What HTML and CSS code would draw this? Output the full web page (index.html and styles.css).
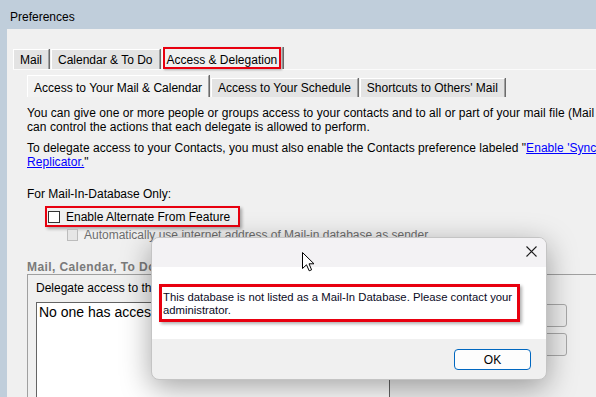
FILE: index.html
```html
<!DOCTYPE html>
<html lang="en">
<head>
    <meta charset="UTF-8">
    <title>Preferences</title>
    <link rel="stylesheet" href="styles.css">
</head>
<body>
    <div class="titlebar">Preferences</div>

    <div class="panel">
        <div class="tabs tabs-main">
            <div class="tab">Mail</div>
            <div class="tab">Calendar &amp; To Do</div>
            <div class="tab active"><span class="hl">Access &amp; Delegation</span></div>
        </div>

        <div class="page">
            <div class="tabs tabs-sub">
                <div class="tab active">Access to Your Mail &amp; Calendar</div>
                <div class="tab">Access to Your Schedule</div>
                <div class="tab">Shortcuts to Others' Mail</div>
            </div>

            <div class="content">
                <p class="note">You can give one or more people or groups access to your contacts and to all or part of your mail file (Mail<br>can control the actions that each delegate is allowed to perform.</p>
                <p class="note">To delegate access to your Contacts, you must also enable the Contacts preference labeled "<a href="#">Enable 'Sync<br>Replicator.</a>"</p>

                <p class="mid-label">For Mail-In-Database Only:</p>
                <label class="check check-hl"><span class="box"></span>Enable Alternate From Feature</label>
                <label class="check check-off"><span class="box"></span>Automatically use internet address of Mail-in database as sender</label>

                <div class="group-title">Mail, Calendar, To Do</div>
                <div class="group">
                    <div class="group-text">Delegate access to the</div>
                    <div class="group-body">
                        <div class="list">No one has access</div>
                        <div class="buttons">
                            <div class="btn"></div>
                            <div class="btn"></div>
                        </div>
                    </div>
                </div>
            </div>
        </div>
    </div>

    <!-- message box on top -->
    <div class="dialog">
        <div class="dialog-title">
            <svg class="close" width="11" height="11" viewBox="0 0 11 11">
                <path d="M0.5 0.5 L10.5 10.5 M10.5 0.5 L0.5 10.5" stroke="#1b1b1b" stroke-width="1.1" fill="none"/>
            </svg>
        </div>
        <div class="dialog-body">
            <div class="msg">This database is not listed as a Mail-In Database. Please contact your<br>administrator.</div>
        </div>
        <div class="dialog-foot">
            <button class="ok">OK</button>
        </div>
    </div>

    <svg class="cursor" width="13" height="20" viewBox="0 0 13 20">
        <path d="M0.5 0.5 L0.5 16.5 L4.5 12.8 L7.2 18.8 L9.6 17.8 L7 11.8 L12 11.8 Z" fill="#fff" stroke="#000" stroke-width="1" stroke-linejoin="round"/>
    </svg>
</body>
</html>
```

FILE: styles.css
```css
/* Global */
* {
    box-sizing: border-box;
}

body {
    margin: 0;
    height: 397px;
    overflow: hidden;
    position: relative;
    background: #c0cedb;
    font-family: "Liberation Sans", Arial, sans-serif;
    font-size: 12px;
    color: #000;
}

/* Window title */
.titlebar {
    height: 29px;
    padding: 10px 0 0 10px;
    line-height: 14px;
}

/* Window body */
.panel {
    margin-left: 7px;
    height: 368px;
    padding: 18px 0 0 6px;
    background: #f0f0f0;
    overflow: hidden;
}

/* Tabs */
.tabs {
    display: flex;
    align-items: flex-end;
    white-space: nowrap;
}

.tabs-main {
    height: 23px;
    border-bottom: 1px solid #fbfbfb;
}

.tab {
    height: 20px;
    line-height: 20px;
    padding: 0 6px;
    margin-right: 2px;
    background: #e3e3e3;
    border-top: 1px solid #fff;
    border-left: 1px solid #fff;
    border-right: 1px solid #a0a0a0;
    box-shadow: 1px 0 0 #6b6b6b;
}

.tabs-main .tab.active {
    height: 22px;
    padding: 0 1px 0 0;
    border-top: none;
    background: #f0f0f0;
}

.hl {
    display: block;
    height: 22px;
    padding: 3px 2px 0;
    line-height: 17px;
    border: 2px solid #e8000f;
    box-shadow: 1px 1px 2px rgba(0, 0, 0, 0.3);
}

.page {
    padding-left: 14px;
}

.tabs-sub {
    margin-top: 5px;
}

.tabs-sub .tab {
    height: 19px;
    line-height: 19px;
}

.tabs-sub .tab.active {
    height: 22px;
    padding-top: 3px;
    background: #f2f2f2;
}

/* Texts */
.content {
    padding-top: 9px;
}

.note {
    margin: 0 0 7px;
    line-height: 14px;
    white-space: nowrap;
    letter-spacing: 0.05px;
}

.note a {
    color: #0000ff;
}

.mid-label {
    margin: 18px 0 5px;
    line-height: 14px;
}

/* Check boxes */
.check {
    display: flex;
    align-items: center;
    white-space: nowrap;
}

.box {
    width: 12px;
    height: 12px;
    margin-right: 6px;
    background: #fff;
    border: 1px solid #333;
}

.check-hl {
    width: 195px;
    height: 21px;
    margin-left: 18px;
    padding-left: 1px;
    border: 2px solid #e8000f;
    box-shadow: 2px 2px 3px rgba(0, 0, 0, 0.3);
}

.check-off {
    height: 14px;
    margin: 1px 0 0 40px;
    color: #6d6d6d;
}

.check-off .box {
    width: 11px;
    border-color: #bcbcbc;
    background: #e6e6e6;
}

/* Delegation group */
.group-title {
    margin-top: 18px;
    line-height: 14px;
    font-weight: bold;
    color: #7a7a7a;
    letter-spacing: 0.4px;
}

.group {
    width: 620px;
    height: 140px;
    padding: 6px 0 0 8px;
    border-top: 1px solid #a0a0a0;
    border-left: 1px solid #a0a0a0;
}

.group-text {
    line-height: 14px;
    white-space: nowrap;
}

.group-body {
    display: flex;
    margin-top: 7px;
}

.list {
    width: 354px;
    height: 96px;
    padding: 1px 2px;
    background: #fff;
    border: 1px solid #646464;
    font-size: 14px;
    line-height: 16px;
}

.buttons {
    display: flex;
    flex-direction: column;
    gap: 6px;
    margin-left: 92px;
    padding-top: 2px;
}

.btn {
    width: 85px;
    height: 23px;
    background: #ececec;
    border: 1px solid #a8a8a8;
    border-radius: 3px;
}

/* Message box */
.dialog {
    position: absolute;
    left: 151px;
    top: 237px;
    width: 396px;
    height: 143px;
    border-radius: 8px;
    overflow: hidden;
    background: #f0f0f0;
    border: 1px solid #c4c4c4;
    box-shadow: 0 8px 30px rgba(0, 0, 0, 0.36);
}

.dialog-title {
    height: 29px;
    display: flex;
    justify-content: flex-end;
    padding: 8px 9px 0 0;
    background: #f3f2f4;
}

.dialog-body {
    height: 72px;
    padding: 17px 0 0 7px;
    background: #fff;
}

.msg {
    width: 361px;
    height: 38px;
    padding: 4px 0 0 1px;
    border: 3px solid #e8000f;
    box-shadow: 2px 2px 3px rgba(0, 0, 0, 0.3);
    font-size: 11.3px;
    line-height: 13px;
    white-space: nowrap;
    color: #0a0a1e;
}

.dialog-foot {
    display: flex;
    justify-content: flex-end;
    padding: 10px 15px 0 0;
}

.ok {
    width: 77px;
    height: 21px;
    padding: 0;
    background: #fdfdfd;
    border: 1px solid #0067c0;
    border-radius: 4px;
    font-family: "Liberation Sans", Arial, sans-serif;
    font-size: 12px;
    color: #000;
}

/* Mouse pointer */
.cursor {
    position: absolute;
    left: 302px;
    top: 252px;
}
```
